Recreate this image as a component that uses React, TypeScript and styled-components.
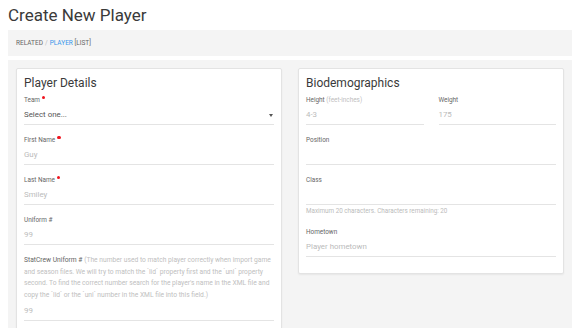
import React from "react";
import styled, { createGlobalStyle } from "styled-components";

const Global = createGlobalStyle`
  html, body { margin: 0; padding: 0; background: #fff; }
  body { font-family: Roboto, "Liberation Sans", sans-serif; color: #333; }
  * { box-sizing: border-box; }
`;

const Page = styled.div`
  padding: 0 8px;
  width: 586px;
  height: 328px;
  overflow: hidden;
`;

const Heading = styled.h1`
  margin: 0;
  height: 30px;
  font-size: 17px;
  font-weight: 400;
  line-height: 30px;
  color: #3a3a3a;
`;

const Breadcrumb = styled.div`
  width: 564px;
  height: 26px;
  background: #f4f4f4;
  padding: 0 8px;
  font-size: 6.5px;
  line-height: 26px;
  color: #666;
  text-transform: uppercase;
`;

const Sep = styled.span`
  color: #bbb;
  margin: 0 2px;
`;

const Crumb = styled.span`
  color: #3a97ea;
`;

const Panel = styled.div`
  margin-top: 4px;
  width: 564px;
  background: #f4f4f4;
  padding: 8px;
  display: grid;
  grid-template-columns: 1fr 1fr;
  gap: 16px;
  align-items: start;
`;

const Card = styled.div`
  background: #fff;
  border: 1px solid #e3e3e3;
  border-radius: 2px;
  box-shadow: 0 1px 2px rgba(0, 0, 0, 0.06);
  padding: 7px 7px 16px 7px;
`;

const CardTitle = styled.h2`
  margin: 0 0 -5px;
  font-size: 12px;
  font-weight: 400;
  line-height: 14px;
  color: #3a3a3a;
`;

const Field = styled.div`
  padding-top: 10px;
`;

const Label = styled.div`
  font-size: 6.4px;
  line-height: 10px;
  color: #666;
`;

const LongLabel = styled(Label)`
  font-size: 6.7px;
  line-height: 11.6px;
`;

const Hint = styled.span`
  color: #c0c0c0;
`;

const Req = styled.span`
  display: inline-block;
  position: relative;
  top: -3px;
  width: 3.5px;
  height: 3.5px;
  border-radius: 50%;
  background: #f0141e;
  margin-left: 2px;
  vertical-align: middle;
`;

const Input = styled.div<{ $filled?: boolean }>`
  margin-top: 1px;
  height: 19px;
  border-bottom: 1px solid #e4e4e4;
  font-size: 7.9px;
  line-height: 18px;
  color: ${(p) => (p.$filled ? "#555" : "#bbb")};
  display: flex;
  align-items: center;
  justify-content: space-between;
`;

const Caret = styled.span`
  width: 0;
  height: 0;
  border-left: 2.5px solid transparent;
  border-right: 2.5px solid transparent;
  border-top: 3px solid #555;
  margin-right: 1px;
`;

const Help = styled.div`
  margin-top: 1px;
  font-size: 6.3px;
  line-height: 11px;
  color: #bbb;
`;

const Row = styled.div`
  display: grid;
  grid-template-columns: 1fr 1fr;
  gap: 15px;
`;

export default function App() {
  return (
    <Page>
      <Global />
      <Heading>Create New Player</Heading>
      <Breadcrumb>
        Related<Sep>/</Sep>
        <Crumb>Player</Crumb> [List]
      </Breadcrumb>
      <Panel>
        <Card>
          <CardTitle>Player Details</CardTitle>
          <Field>
            <Label>
              Team<Req />
            </Label>
            <Input $filled>
              Select one...
              <Caret />
            </Input>
          </Field>
          <Field>
            <Label>
              First Name<Req />
            </Label>
            <Input>Guy</Input>
          </Field>
          <Field>
            <Label>
              Last Name<Req />
            </Label>
            <Input>Smiley</Input>
          </Field>
          <Field>
            <Label>Uniform #</Label>
            <Input>99</Input>
          </Field>
          <Field>
            <LongLabel>
              StatCrew Uniform #{" "}
              <Hint>
                (The number used to match player correctly when import game and
                season files. We will try to match the `lid` property first and
                the `uni` property second. To find the correct number search for
                the player's name in the XML file and copy the `lid` or the `uni`
                number in the XML file into this field.)
              </Hint>
            </LongLabel>
            <Input>99</Input>
          </Field>
        </Card>
        <Card>
          <CardTitle>Biodemographics</CardTitle>
          <Row>
            <Field>
              <Label>
                Height <Hint>(feet-inches)</Hint>
              </Label>
              <Input>4-3</Input>
            </Field>
            <Field>
              <Label>Weight</Label>
              <Input>175</Input>
            </Field>
          </Row>
          <Field>
            <Label>Position</Label>
            <Input />
          </Field>
          <Field>
            <Label>Class</Label>
            <Input />
            <Help>Maximum 20 characters. Characters remaining: 20</Help>
          </Field>
          <Field>
            <Label>Hometown</Label>
            <Input>Player hometown</Input>
          </Field>
        </Card>
      </Panel>
    </Page>
  );
}
